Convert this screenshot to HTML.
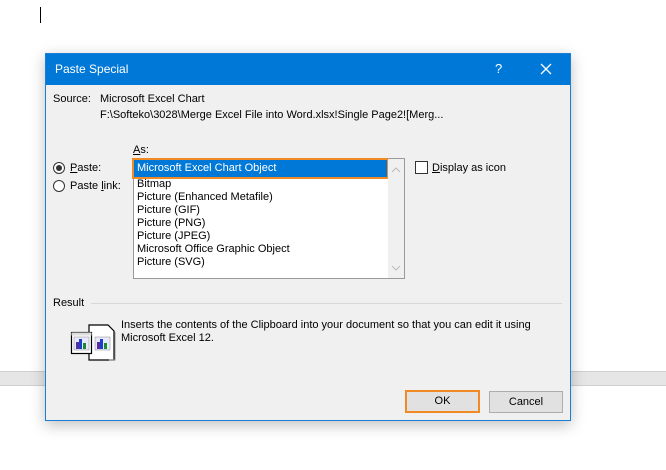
<!DOCTYPE html>
<html><head><style>
*{box-sizing:border-box;margin:0;padding:0}
body{width:666px;height:470px;background:#fff;position:relative;overflow:hidden;font-family:"Liberation Sans",sans-serif;font-size:11px;color:#000}
.a{position:absolute;white-space:nowrap}
</style></head><body>
<div class="a" style="left:40px;top:7px;width:1px;height:16px;background:#000"></div>
<div class="a" style="left:0;top:371px;width:666px;height:15px;background:#e6e6e6;border-top:1px solid #d0d0d0;border-bottom:1px solid #d0d0d0"></div>
<div class="a" style="left:45px;top:53px;width:526px;height:368px;background:#f0f0f0;border:1px solid #1a7fd4;box-shadow:0 4px 14px rgba(0,0,0,.25)">
 <div class="a" style="left:0;top:0;width:524px;height:31px;background:#0078d7;color:#fff;font-size:12px">
  <span class="a" style="left:9px;top:8px">Paste Special</span>
  <span class="a" style="left:449px;top:7px;font-size:13px">?</span>
  <svg class="a" style="left:494px;top:9px" width="12" height="12"><path d="M1 1L11 11M11 1L1 11" stroke="#fff" stroke-width="1.3"/></svg>
 </div>
 <span class="a" style="left:7px;top:39px">Source:</span>
 <span class="a" style="left:54px;top:39px">Microsoft Excel Chart</span>
 <span class="a" style="left:54px;top:55px">F:\Softeko\3028\Merge Excel File into Word.xlsx!Single Page2![Merg...</span>
 <span class="a" style="left:87px;top:90px"><u>A</u>s:</span>
 <div class="a" style="left:7px;top:108px;width:12px;height:12px;border:1px solid #333;border-radius:50%;background:#fff"><div class="a" style="left:2px;top:2px;width:6px;height:6px;border-radius:50%;background:#333"></div></div>
 <span class="a" style="left:24px;top:108px"><u>P</u>aste:</span>
 <div class="a" style="left:7px;top:126px;width:12px;height:12px;border:1px solid #333;border-radius:50%;background:#fff"></div>
 <span class="a" style="left:24px;top:126px">Paste <u>l</u>ink:</span>
 <div class="a" style="left:87px;top:104px;width:272px;height:121px;background:#fff;border:1px solid #999">
  <div class="a" style="left:0;top:1px;width:253px;height:17px;background:#0078d7;outline:2px solid #f08a24;outline-offset:0"></div>
  <span class="a" style="left:3px;top:3px;color:#fff">Microsoft Excel Chart Object</span>
  <span class="a" style="left:3px;top:19px">Bitmap</span>
  <span class="a" style="left:3px;top:32px">Picture (Enhanced Metafile)</span>
  <span class="a" style="left:3px;top:45px">Picture (GIF)</span>
  <span class="a" style="left:3px;top:58px">Picture (PNG)</span>
  <span class="a" style="left:3px;top:71px">Picture (JPEG)</span>
  <span class="a" style="left:3px;top:84px">Microsoft Office Graphic Object</span>
  <span class="a" style="left:3px;top:97px">Picture (SVG)</span>
  <div class="a" style="left:254px;top:0;width:16px;height:119px;background:#f0f0f0"></div>
  <svg class="a" style="left:257px;top:8px" width="10" height="6"><path d="M1 5L5 1L9 5" stroke="#bbb" fill="none"/></svg>
  <svg class="a" style="left:257px;top:106px" width="10" height="6"><path d="M1 1L5 5L9 1" stroke="#bbb" fill="none"/></svg>
 </div>
 <div class="a" style="left:369px;top:107px;width:13px;height:13px;border:1px solid #333;background:#fff"></div>
 <span class="a" style="left:386px;top:108px"><u>D</u>isplay as icon</span>
 <span class="a" style="left:7px;top:243px">Result</span>
 <div class="a" style="left:45px;top:249px;width:471px;height:1px;background:#d8d8d8"></div>
 <svg class="a" style="left:24px;top:270px" width="46" height="38">
  <path d="M19 1H38L44 7V36H19Z" fill="#fff" stroke="#000" stroke-width="1.2"/>
  <path d="M39 36H45V8" stroke="#999" fill="none"/>
  <rect x="1.5" y="8.5" width="20" height="21" fill="#fff" stroke="#000" stroke-width="1.2"/>
  <rect x="1.5" y="8.5" width="20" height="3" fill="#ddd"/>
  <rect x="4" y="13" width="15" height="13" fill="#e8e8ff" stroke="#888" stroke-width=".5"/>
  <rect x="6" y="18" width="3" height="7" fill="#5a2ca0"/><rect x="9" y="15" width="3" height="10" fill="#1a3fc8"/><rect x="13" y="19" width="3" height="6" fill="#1a8a2a"/>
  <rect x="25" y="13" width="15" height="13" fill="#e8e8ff" stroke="#888" stroke-width=".5"/>
  <rect x="27" y="18" width="3" height="7" fill="#5a2ca0"/><rect x="30" y="15" width="3" height="10" fill="#1a3fc8"/><rect x="34" y="19" width="3" height="6" fill="#1a8a2a"/>
 </svg>
 <span class="a" style="left:75px;top:265px">Inserts the contents of the Clipboard into your document so that you can edit it using</span>
 <span class="a" style="left:75px;top:278px">Microsoft Excel 12.</span>
 <div class="a" style="left:359px;top:336px;width:75px;height:23px;background:#e1e1e1;border:2px solid #f08a24;text-align:center;line-height:19px">OK</div>
 <div class="a" style="left:443px;top:337px;width:74px;height:22px;background:#e1e1e1;border:1px solid #adadad;text-align:center;line-height:20px">Cancel</div>
</div>
</body></html>
